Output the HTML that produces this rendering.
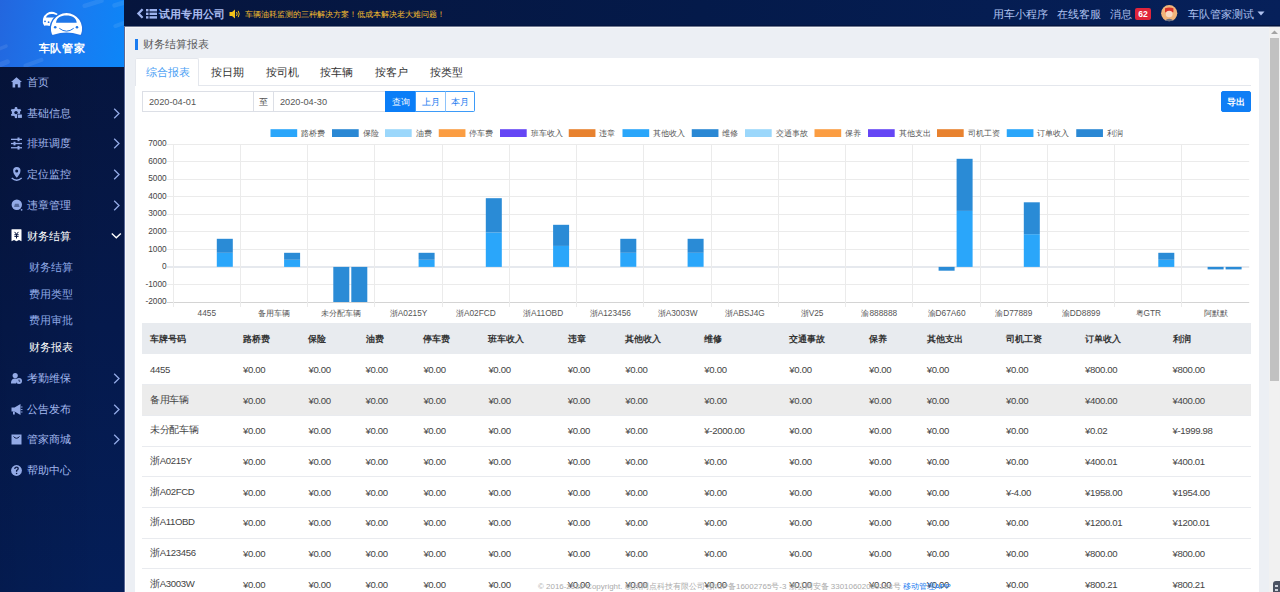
<!DOCTYPE html>
<html><head><meta charset="utf-8">
<style>
*{box-sizing:border-box;margin:0;padding:0}
html,body{width:1280px;height:592px;overflow:hidden;font-family:"Liberation Sans",sans-serif;background:#eceff4;position:relative}
.abs{position:absolute}
#side{position:absolute;left:0;top:0;width:124px;height:592px;background:linear-gradient(90deg,rgba(0,0,0,0.10),rgba(0,0,0,0) 85%),linear-gradient(180deg,#06143b 0%,#05194c 55%,#041e58 100%)}
#logo{position:absolute;left:0;top:0;width:124px;height:67px;background:linear-gradient(100deg,#2366de 0%,#1a7af0 55%,#0c86f8 100%);overflow:hidden}
#logo .t{position:absolute;left:0;width:124px;top:40.5px;text-align:center;color:#fff;font-size:11.2px;line-height:15px;letter-spacing:0.6px;font-weight:bold}
.mi{position:absolute;left:0;width:124px;height:20px;color:#a3b8ee;font-size:11px;line-height:20px}
.mi .tx{position:absolute;left:27px;top:0}
.mi svg.ic{position:absolute;left:11px;top:4px}
.mi svg.ch{position:absolute;left:112px;top:5px}
.sub{position:absolute;left:29px;color:#8ea8e6;font-size:11px;line-height:20px}
#hdr{position:absolute;left:124px;top:0;width:1156px;height:26px;border-bottom:1px solid #021440;background:linear-gradient(90deg,#06153d 0%,#041a4a 50%,#06205a 100%)}
.hl{position:absolute;top:5.7px;color:#afc2f0;font-size:10.8px;line-height:17px;white-space:nowrap}
#ptitle{position:absolute;left:143px;top:36px;font-size:10.6px;line-height:17px;color:#5a5a5a}
#pbar{position:absolute;left:135px;top:39px;width:3px;height:11px;background:#1a7cf0}
#card{position:absolute;left:135px;top:58px;width:1124px;height:560px;background:#fff;border-radius:2px}
#tabline{position:absolute;left:199px;top:85px;width:1052px;height:1px;background:#e4e7ed}
#tab0{position:absolute;left:135px;top:58px;width:64px;height:28px;border:1px solid #e4e7ed;border-bottom:none;background:#fff;border-radius:2px 2px 0 0}
.tab{position:absolute;top:63px;font-size:11px;line-height:18px;color:#333;white-space:nowrap}
.inp{position:absolute;top:91px;height:21px;border:1px solid #dcdfe6;background:#fff;font-size:9.2px;line-height:20px;color:#555;padding-left:6px}
.btn{position:absolute;top:91px;height:21px;font-size:9.4px;line-height:20px;text-align:center;border:1px solid #3d9bf8;color:#1a7cf0;background:#fff;font-weight:500}
#tbl{position:absolute;left:142px;top:323px;width:1109px;border-collapse:collapse;table-layout:fixed}
#tbl th{height:31px;background:#e8ebef;font-weight:bold;color:#333;font-size:9.2px;text-align:left;padding-left:8px;padding-top:2px;white-space:nowrap}
#tbl td{height:30.7px;border-bottom:1px solid #e9ebef;color:#444;font-size:9.6px;letter-spacing:-0.35px;text-align:left;padding-left:8px;white-space:nowrap}
#tbl tr.hv td{background:#ececec}
#foot{position:absolute;left:538px;top:580.5px;font-size:7.95px;line-height:12px;color:#ababab;white-space:nowrap}
#foot span{color:#1a7cf0}
#sb{position:absolute;left:1269px;top:27px;width:11px;height:565px;background:#f1f1f1}
#thumb{position:absolute;left:1270px;top:38px;width:9px;height:343px;background:#c1c1c1}
</style></head>
<body>
<div id="side">
  <div id="logo">
    <svg class="abs" style="left:0;top:0" width="124" height="67">
      <g fill="#fff" opacity="0.08">
        <rect x="82" y="1" width="22" height="4.5" rx="2.2" transform="rotate(-17 93 3)"/>
        <rect x="112" y="1.5" width="16" height="4.5" rx="2.2" transform="rotate(-17 120 3.5)"/>
        <rect x="113" y="22" width="16" height="4" rx="2" transform="rotate(-20 121 24)"/>
        <rect x="-4" y="46" width="12" height="3.5" rx="1.7" transform="rotate(-22 2 47.5)"/>
        <rect x="-3" y="61" width="13" height="5" rx="2.5" transform="rotate(-22 3 63)"/>
        <rect x="23" y="61" width="21" height="4" rx="2" transform="rotate(-20 33 63)"/>
      </g>
      <path d="M44.2 25.8 A9 9 0 1 1 59.5 16 L53 27 Q50 26 47 25.6 Q45 25.4 44.2 25.8 Z" fill="#fff"/>
      <path d="M46 17.6 C46.6 15.3 48.6 14 51.5 14 C54 14 56 14.6 57.5 15.6 L56 17.6 Z" fill="#1f73e6"/>
      <circle cx="45" cy="21.3" r="0.9" fill="#1f73e6"/><circle cx="48.6" cy="22.2" r="0.9" fill="#1f73e6"/>
      <path d="M52.06 34.6 A15.6 15.6 0 1 1 80.94 34.6 Q80.3 35.1 78.8 34.4 Q73 32.5 66.5 32.5 Q60 32.5 54.2 34.4 Q52.7 35.1 52.06 34.6 Z" fill="#1f74e7" stroke="#1f74e7" stroke-width="2.6"/>
      <path d="M52.06 34.6 A15.6 15.6 0 1 1 80.94 34.6 Q80.3 35.1 78.8 34.4 Q73 32.5 66.5 32.5 Q60 32.5 54.2 34.4 Q52.7 35.1 52.06 34.6 Z" fill="#fff"/>
      <path d="M56 22.7 C56.5 18 60.5 15.6 66.4 15.6 C72.3 15.6 76.2 18 76.7 22.7 Z" fill="#1e76e8"/>
      <circle cx="55.2" cy="27.3" r="1.3" fill="#1e76e8"/>
      <circle cx="77" cy="27.3" r="1.3" fill="#1e76e8"/>
      <path d="M59.3 28.3 Q66.5 34 73.7 28.3" stroke="#1e76e8" stroke-width="1" fill="none"/>
    </svg>
    <div class="t">车队管家</div>
  </div>
  <div class="mi" style="top:72.0px;color:#a3b8ee">
<svg class="ic" style="top:2px" width="13" height="16" viewBox="0 -2.5 13 16"><path d="M5.5 0.8 L11 5.6 H9.4 V11 H6.8 V7.8 H4.2 V11 H1.6 V5.6 H0 Z" fill="#93aae6"/></svg>
<span class="tx">首页</span>
</div>
<div class="mi" style="top:102.7px;color:#a3b8ee">
<svg class="ic" style="top:2px" width="13" height="16" viewBox="0 -2.5 13 16"><g fill="#93aae6" transform="translate(5 5.1)"><circle r="4.1"/><rect x="-1.15" y="-5.5" width="2.3" height="2.4" transform="rotate(0)"/><rect x="-1.15" y="-5.5" width="2.3" height="2.4" transform="rotate(60)"/><rect x="-1.15" y="-5.5" width="2.3" height="2.4" transform="rotate(120)"/><rect x="-1.15" y="-5.5" width="2.3" height="2.4" transform="rotate(180)"/><rect x="-1.15" y="-5.5" width="2.3" height="2.4" transform="rotate(240)"/><rect x="-1.15" y="-5.5" width="2.3" height="2.4" transform="rotate(300)"/></g><circle cx="5" cy="5.1" r="1.7" fill="#06163f"/><rect x="6.2" y="6.3" width="5.3" height="4.7" fill="#06163f"/><rect x="6.9" y="7" width="4" height="3.4" fill="#93aae6"/></svg>
<span class="tx">基础信息</span>
<svg class="ch" style="left:113px;top:5px" width="8" height="11"><path d="M1.2 0.8 L6 5.5 L1.2 10.2" stroke="#93aae6" stroke-width="1.3" fill="none"/></svg>
</div>
<div class="mi" style="top:133.4px;color:#a3b8ee">
<svg class="ic" style="top:2px" width="13" height="16" viewBox="0 -2.5 13 16"><g fill="#93aae6"><rect x="0" y="1.2" width="11" height="1.3"/><rect x="0" y="5.4" width="11" height="1.3"/><rect x="0" y="9.6" width="11" height="1.3"/><rect x="6.5" y="0" width="2" height="3.7"/><rect x="2.5" y="4.2" width="2" height="3.7"/><rect x="6.5" y="8.4" width="2" height="3.7"/></g></svg>
<span class="tx">排班调度</span>
<svg class="ch" style="left:113px;top:5px" width="8" height="11"><path d="M1.2 0.8 L6 5.5 L1.2 10.2" stroke="#93aae6" stroke-width="1.3" fill="none"/></svg>
</div>
<div class="mi" style="top:164.1px;color:#a3b8ee">
<svg class="ic" style="top:2px" width="13" height="16" viewBox="0 -2.5 13 16"><path d="M5.8 9.3 C4.6 7.6 2.1 5.4 2.1 2.3 A3.7 3.7 0 0 1 9.5 2.3 C9.5 5.4 7 7.6 5.8 9.3 Z" fill="#93aae6"/><circle cx="5.7" cy="2.5" r="1.5" fill="#06163f"/><path d="M0.7 9.4 Q5.7 13.9 10.7 9.4" stroke="#93aae6" stroke-width="1.4" fill="none"/></svg>
<span class="tx">定位监控</span>
<svg class="ch" style="left:113px;top:5px" width="8" height="11"><path d="M1.2 0.8 L6 5.5 L1.2 10.2" stroke="#93aae6" stroke-width="1.3" fill="none"/></svg>
</div>
<div class="mi" style="top:194.8px;color:#a3b8ee">
<svg class="ic" style="top:2px" width="13" height="16" viewBox="0 -2.5 13 16"><circle cx="5.8" cy="5.2" r="5.2" fill="#93aae6"/><path d="M3.3 6.5 L4 4.2 H7.6 L8.3 6.5 Z M3.2 6.5 H8.4 V7.6 H3.2 Z" fill="#06163f" opacity="0.45"/><circle cx="10.6" cy="10.3" r="0.9" fill="#93aae6"/></svg>
<span class="tx">违章管理</span>
<svg class="ch" style="left:113px;top:5px" width="8" height="11"><path d="M1.2 0.8 L6 5.5 L1.2 10.2" stroke="#93aae6" stroke-width="1.3" fill="none"/></svg>
</div>
<div class="mi" style="top:225.5px;color:#ffffff">
<svg class="ic" style="top:2px" width="13" height="16" viewBox="0 -2.5 13 16"><g transform="translate(0 -1.2)"><path d="M0.5 0.3 Q0.5 0 1 0 H10 Q10.5 0 10.5 0.5 V12 L8 10.6 L5.5 12 L3 10.6 L0.5 12 Z" fill="#fff"/><path d="M3.6 2.6 L5.5 5 L7.4 2.6 M3.4 5.4 H7.6 M3.4 7.1 H7.6 M5.5 5 V9.2" stroke="#06163f" stroke-width="1" fill="none"/></g></svg>
<span class="tx">财务结算</span>
<svg class="ch" style="left:111px;top:6px" width="11" height="8"><path d="M0.8 1.5 L5.3 5.8 L9.8 1.5" stroke="#fff" stroke-width="1.4" fill="none"/></svg>
</div>
<div class="mi" style="top:368.2px;color:#a3b8ee">
<svg class="ic" style="top:2px" width="13" height="16" viewBox="0 -2.5 13 16"><circle cx="4.2" cy="3" r="2.6" fill="#93aae6"/><path d="M0 11 C0 7 2 6 4.2 6 C5.5 6 6 6.3 6.5 6.6 L5 11 Z" fill="#93aae6"/><circle cx="8" cy="8.5" r="3" fill="#93aae6"/><path d="M8 7 V8.7 H9.3" stroke="#0b1a45" stroke-width="0.8" fill="none"/></svg>
<span class="tx">考勤维保</span>
<svg class="ch" style="left:113px;top:5px" width="8" height="11"><path d="M1.2 0.8 L6 5.5 L1.2 10.2" stroke="#93aae6" stroke-width="1.3" fill="none"/></svg>
</div>
<div class="mi" style="top:398.6px;color:#a3b8ee">
<svg class="ic" style="top:2px" width="13" height="16" viewBox="0 -2.5 13 16"><path d="M0.5 4 H3.5 L9.5 0.5 V11.5 L3.5 8 H0.5 Z" fill="#93aae6"/><path d="M9.8 3.5 H11.5 M9.8 6 H11.5 M9.8 8.5 H11.5" stroke="#93aae6" stroke-width="0.9"/><rect x="2" y="8" width="1.8" height="3" fill="#93aae6"/></svg>
<span class="tx">公告发布</span>
<svg class="ch" style="left:113px;top:5px" width="8" height="11"><path d="M1.2 0.8 L6 5.5 L1.2 10.2" stroke="#93aae6" stroke-width="1.3" fill="none"/></svg>
</div>
<div class="mi" style="top:429.4px;color:#a3b8ee">
<svg class="ic" style="top:2px" width="13" height="16" viewBox="0 -2.5 13 16"><path d="M0.5 1 H10.5 V11 H0.5 Z" fill="#93aae6"/><path d="M2.5 3 Q5.5 6.5 8.5 3" stroke="#0b1a45" stroke-width="1" fill="none"/></svg>
<span class="tx">管家商城</span>
<svg class="ch" style="left:113px;top:5px" width="8" height="11"><path d="M1.2 0.8 L6 5.5 L1.2 10.2" stroke="#93aae6" stroke-width="1.3" fill="none"/></svg>
</div>
<div class="mi" style="top:460.3px;color:#a3b8ee">
<svg class="ic" style="top:2px" width="13" height="16" viewBox="0 -2.5 13 16"><circle cx="5.5" cy="6" r="5.4" fill="#93aae6"/><path d="M3.8 4.5 Q3.8 2.6 5.5 2.6 Q7.2 2.6 7.2 4.2 Q7.2 5.2 5.6 6 V7.2" stroke="#0b1a45" stroke-width="1.3" fill="none"/><circle cx="5.6" cy="9" r="0.8" fill="#0b1a45"/></svg>
<span class="tx">帮助中心</span>
</div>
<div class="sub" style="top:256.7px;">财务结算</div>
<div class="sub" style="top:284.0px;">费用类型</div>
<div class="sub" style="top:310.2px;">费用审批</div>
<div class="sub" style="top:336.6px;color:#fff">财务报表</div>
</div>
<div id="hdr">
  <svg class="abs" style="left:12px;top:8px" width="36" height="12">
    <path d="M6.6 1.2 L2.4 5.5 L6.6 9.8" stroke="#9fb3ee" stroke-width="2.3" fill="none"/>
    <g fill="#9fb3ee"><rect x="10" y="1" width="2.5" height="2.4"/><rect x="13.5" y="1" width="7.5" height="2.4"/>
    <rect x="10" y="4.6" width="2.5" height="2.4"/><rect x="13.5" y="4.6" width="7.5" height="2.4"/>
    <rect x="10" y="8.2" width="2.5" height="2.4"/><rect x="13.5" y="8.2" width="7.5" height="2.4"/></g>
  </svg>
  <div class="hl" style="left:35px;font-weight:bold;color:#a9bcf0;font-size:11.2px">试用专用公司</div>
  <svg class="abs" style="left:105px;top:9px" width="12" height="10">
    <path d="M0.5 3 H3 L6 0.5 V9.5 L3 7 H0.5 Z" fill="#f3c21b"/>
    <path d="M7.5 3 Q8.8 5 7.5 7" stroke="#f3c21b" stroke-width="1" fill="none"/>
    <path d="M9.2 1.8 Q11.2 5 9.2 8.2" stroke="#f3c21b" stroke-width="1" fill="none"/>
  </svg>
  <div class="hl" style="left:121px;top:7px;font-size:7.9px;line-height:16px;color:#f5be2e;font-weight:500">车辆油耗监测的三种解决方案！低成本解决老大难问题！</div>
  <div class="hl" style="left:869px">用车小程序</div>
  <div class="hl" style="left:933px">在线客服</div>
  <div class="hl" style="left:986px">消息</div>
  <div class="abs" style="left:1011px;top:8px;width:16px;height:12px;background:#e0253b;border-radius:2px;color:#fff;font-size:8.5px;line-height:12px;text-align:center;font-weight:bold">62</div>
  <svg class="abs" style="left:1037px;top:5px" width="17" height="17">
    <circle cx="8.2" cy="8.2" r="8.1" fill="#f0b47a"/>
    <path d="M4 7.2 V3.2 Q8.2 1.8 12.4 3.2 V7.2 Z" fill="#d9342b"/>
    <ellipse cx="8.2" cy="9" rx="3.4" ry="3.2" fill="#f7d9c4"/>
    <path d="M3.5 16 Q8.2 11.5 12.9 16 Z" fill="#6b6f80"/>
  </svg>
  <div class="hl" style="left:1064px">车队管家测试</div>
  <svg class="abs" style="left:1133px;top:10.5px" width="8" height="5"><path d="M0.5 0.5 H7.5 L4 4.5 Z" fill="#afc2f0"/></svg>
</div>
<div class="abs" style="left:124px;top:26px;width:1156px;height:1px;background:#6f7890"></div>
<div class="abs" style="left:124px;top:27px;width:1156px;height:1px;background:#f7f8fb"></div>
<div class="abs" style="left:124px;top:27px;width:1px;height:565px;background:#5a6896"></div>
<div class="abs" style="left:125px;top:27px;width:1px;height:565px;background:#f8f9fc"></div>
<div id="pbar"></div>
<div id="ptitle">财务结算报表</div>
<div id="card"></div>
<div id="tabline"></div>
<div id="tab0"></div>
<div class="tab" style="left:146px;color:#4aa0f4">综合报表</div>
<div class="tab" style="left:211px">按日期</div>
<div class="tab" style="left:265.6px">按司机</div>
<div class="tab" style="left:320px">按车辆</div>
<div class="tab" style="left:375px">按客户</div>
<div class="tab" style="left:429.7px">按类型</div>
<div class="inp" style="left:142px;width:112px">2020-04-01</div>
<div class="inp" style="left:253px;width:21px;padding-left:0;text-align:center">至</div>
<div class="inp" style="left:273px;width:113px">2020-04-30</div>
<div class="btn" style="left:385px;width:31px;background:#0b7ef7;border-color:#0b7ef7;color:#fff">查询</div>
<div class="btn" style="left:415px;width:31px;border-right-color:#8ec3fa">上月</div>
<div class="btn" style="left:446px;width:29px;border-left:none;border-radius:0 2px 2px 0">本月</div>
<div class="btn" style="left:1221px;width:30px;background:#0f7ef5;border-color:#0f7ef5;color:#fff;border-radius:2px;font-weight:bold">导出</div>
<svg class="abs" style="left:0;top:0" width="1280" height="592">
<line x1="167" y1="144.5" x2="1249.2" y2="144.5" stroke="#ebebeb" stroke-width="1"/>
<text x="166.7" y="146.2" text-anchor="end" font-size="8.3" fill="#444">7000</text>
<line x1="167" y1="161.5" x2="1249.2" y2="161.5" stroke="#ebebeb" stroke-width="1"/>
<text x="166.7" y="163.8" text-anchor="end" font-size="8.3" fill="#444">6000</text>
<line x1="167" y1="179.5" x2="1249.2" y2="179.5" stroke="#ebebeb" stroke-width="1"/>
<text x="166.7" y="181.3" text-anchor="end" font-size="8.3" fill="#444">5000</text>
<line x1="167" y1="196.5" x2="1249.2" y2="196.5" stroke="#ebebeb" stroke-width="1"/>
<text x="166.7" y="198.9" text-anchor="end" font-size="8.3" fill="#444">4000</text>
<line x1="167" y1="214.5" x2="1249.2" y2="214.5" stroke="#ebebeb" stroke-width="1"/>
<text x="166.7" y="216.4" text-anchor="end" font-size="8.3" fill="#444">3000</text>
<line x1="167" y1="231.5" x2="1249.2" y2="231.5" stroke="#ebebeb" stroke-width="1"/>
<text x="166.7" y="234.0" text-anchor="end" font-size="8.3" fill="#444">2000</text>
<line x1="167" y1="249.5" x2="1249.2" y2="249.5" stroke="#ebebeb" stroke-width="1"/>
<text x="166.7" y="251.5" text-anchor="end" font-size="8.3" fill="#444">1000</text>
<line x1="167" y1="267" x2="1249.2" y2="267" stroke="#e6e9ee" stroke-width="2"/>
<text x="166.7" y="269.1" text-anchor="end" font-size="8.3" fill="#444">0</text>
<line x1="167" y1="284.5" x2="1249.2" y2="284.5" stroke="#ebebeb" stroke-width="1"/>
<text x="166.7" y="286.6" text-anchor="end" font-size="8.3" fill="#444">-1000</text>
<line x1="167" y1="302.5" x2="1249.2" y2="302.5" stroke="#d4d4d4" stroke-width="1"/>
<text x="166.7" y="304.2" text-anchor="end" font-size="8.3" fill="#444">-2000</text>
<line x1="173.5" y1="144.0" x2="173.5" y2="307.0" stroke="#ebebeb" stroke-width="1"/>
<line x1="240.5" y1="144.0" x2="240.5" y2="307.0" stroke="#ebebeb" stroke-width="1"/>
<line x1="307.5" y1="144.0" x2="307.5" y2="307.0" stroke="#ebebeb" stroke-width="1"/>
<line x1="374.5" y1="144.0" x2="374.5" y2="307.0" stroke="#ebebeb" stroke-width="1"/>
<line x1="442.5" y1="144.0" x2="442.5" y2="307.0" stroke="#ebebeb" stroke-width="1"/>
<line x1="509.5" y1="144.0" x2="509.5" y2="307.0" stroke="#ebebeb" stroke-width="1"/>
<line x1="576.5" y1="144.0" x2="576.5" y2="307.0" stroke="#ebebeb" stroke-width="1"/>
<line x1="643.5" y1="144.0" x2="643.5" y2="307.0" stroke="#ebebeb" stroke-width="1"/>
<line x1="711.5" y1="144.0" x2="711.5" y2="307.0" stroke="#ebebeb" stroke-width="1"/>
<line x1="778.5" y1="144.0" x2="778.5" y2="307.0" stroke="#ebebeb" stroke-width="1"/>
<line x1="845.5" y1="144.0" x2="845.5" y2="307.0" stroke="#ebebeb" stroke-width="1"/>
<line x1="912.5" y1="144.0" x2="912.5" y2="307.0" stroke="#ebebeb" stroke-width="1"/>
<line x1="980.5" y1="144.0" x2="980.5" y2="307.0" stroke="#ebebeb" stroke-width="1"/>
<line x1="1047.5" y1="144.0" x2="1047.5" y2="307.0" stroke="#ebebeb" stroke-width="1"/>
<line x1="1114.5" y1="144.0" x2="1114.5" y2="307.0" stroke="#ebebeb" stroke-width="1"/>
<line x1="1181.5" y1="144.0" x2="1181.5" y2="307.0" stroke="#ebebeb" stroke-width="1"/>
<text x="206.8" y="316.0" text-anchor="middle" font-size="8.3" fill="#555">4455</text>
<text x="274.1" y="316.0" text-anchor="middle" font-size="8.3" fill="#555">备用车辆</text>
<text x="341.3" y="316.0" text-anchor="middle" font-size="8.3" fill="#555">未分配车辆</text>
<text x="408.6" y="316.0" text-anchor="middle" font-size="8.3" fill="#555">浙A0215Y</text>
<text x="475.8" y="316.0" text-anchor="middle" font-size="8.3" fill="#555">浙A02FCD</text>
<text x="543.1" y="316.0" text-anchor="middle" font-size="8.3" fill="#555">浙A11OBD</text>
<text x="610.3" y="316.0" text-anchor="middle" font-size="8.3" fill="#555">浙A123456</text>
<text x="677.6" y="316.0" text-anchor="middle" font-size="8.3" fill="#555">浙A3003W</text>
<text x="744.8" y="316.0" text-anchor="middle" font-size="8.3" fill="#555">浙ABSJ4G</text>
<text x="812.1" y="316.0" text-anchor="middle" font-size="8.3" fill="#555">浙V25</text>
<text x="879.3" y="316.0" text-anchor="middle" font-size="8.3" fill="#555">渝888888</text>
<text x="946.6" y="316.0" text-anchor="middle" font-size="8.3" fill="#555">渝D67A60</text>
<text x="1013.8" y="316.0" text-anchor="middle" font-size="8.3" fill="#555">渝D77889</text>
<text x="1081.1" y="316.0" text-anchor="middle" font-size="8.3" fill="#555">渝DD8899</text>
<text x="1148.3" y="316.0" text-anchor="middle" font-size="8.3" fill="#555">粤GTR</text>
<text x="1215.6" y="316.0" text-anchor="middle" font-size="8.3" fill="#555">阿默默</text>
<rect x="216.8" y="252.8" width="16" height="14.0" fill="#2aa6fa"/>
<rect x="216.8" y="238.8" width="16" height="14.0" fill="#2a8bd6"/>
<rect x="284.1" y="259.9" width="16" height="7.0" fill="#2aa6fa"/>
<rect x="284.1" y="252.8" width="16" height="7.0" fill="#2a8bd6"/>
<rect x="418.6" y="259.9" width="16" height="7.0" fill="#2aa6fa"/>
<rect x="418.6" y="252.8" width="16" height="7.0" fill="#2a8bd6"/>
<rect x="485.8" y="232.5" width="16" height="34.4" fill="#2aa6fa"/>
<rect x="485.8" y="198.2" width="16" height="34.3" fill="#2a8bd6"/>
<rect x="553.1" y="245.8" width="16" height="21.1" fill="#2aa6fa"/>
<rect x="553.1" y="224.8" width="16" height="21.1" fill="#2a8bd6"/>
<rect x="620.3" y="252.8" width="16" height="14.0" fill="#2aa6fa"/>
<rect x="620.3" y="238.8" width="16" height="14.0" fill="#2a8bd6"/>
<rect x="687.6" y="252.8" width="16" height="14.0" fill="#2aa6fa"/>
<rect x="687.6" y="238.8" width="16" height="14.0" fill="#2a8bd6"/>
<rect x="956.6" y="210.9" width="16" height="56.0" fill="#2aa6fa"/>
<rect x="956.6" y="158.8" width="16" height="52.1" fill="#2a8bd6"/>
<rect x="1023.8" y="234.2" width="16" height="32.7" fill="#2aa6fa"/>
<rect x="1023.8" y="202.3" width="16" height="31.9" fill="#2a8bd6"/>
<rect x="1158.3" y="259.9" width="16" height="7.0" fill="#2aa6fa"/>
<rect x="1158.3" y="252.8" width="16" height="7.0" fill="#2a8bd6"/>
<rect x="333.3" y="266.9" width="16" height="35.1" fill="#2a8bd6"/>
<rect x="351.3" y="266.9" width="16" height="35.1" fill="#2a8bd6"/>
<rect x="938.6" y="266.9" width="16" height="3.8" fill="#2a8bd6"/>
<rect x="1207.6" y="266.9" width="16" height="2.5" fill="#2a8bd6"/>
<rect x="1225.6" y="266.9" width="16" height="2.5" fill="#2a8bd6"/>
<rect x="270.5" y="129.2" width="26.7" height="7.8" fill="#2aa6fa"/>
<text x="301.0" y="136" font-size="8" fill="#555">路桥费</text>
<rect x="332" y="129.2" width="26.7" height="7.8" fill="#2a88d4"/>
<text x="362.5" y="136" font-size="8" fill="#555">保险</text>
<rect x="385" y="129.2" width="26.7" height="7.8" fill="#9bd7fb"/>
<text x="415.5" y="136" font-size="8" fill="#555">油费</text>
<rect x="438.75" y="129.2" width="26.7" height="7.8" fill="#fb9d42"/>
<text x="469.25" y="136" font-size="8" fill="#555">停车费</text>
<rect x="500" y="129.2" width="26.7" height="7.8" fill="#6546f5"/>
<text x="530.5" y="136" font-size="8" fill="#555">班车收入</text>
<rect x="568.75" y="129.2" width="26.7" height="7.8" fill="#e8822f"/>
<text x="599.25" y="136" font-size="8" fill="#555">违章</text>
<rect x="622.5" y="129.2" width="26.7" height="7.8" fill="#2aa6fa"/>
<text x="653.0" y="136" font-size="8" fill="#555">其他收入</text>
<rect x="691.75" y="129.2" width="26.7" height="7.8" fill="#2a88d4"/>
<text x="722.25" y="136" font-size="8" fill="#555">维修</text>
<rect x="745" y="129.2" width="26.7" height="7.8" fill="#9bd7fb"/>
<text x="775.5" y="136" font-size="8" fill="#555">交通事故</text>
<rect x="814.5" y="129.2" width="26.7" height="7.8" fill="#fb9d42"/>
<text x="845.0" y="136" font-size="8" fill="#555">保养</text>
<rect x="868" y="129.2" width="26.7" height="7.8" fill="#6546f5"/>
<text x="898.5" y="136" font-size="8" fill="#555">其他支出</text>
<rect x="937" y="129.2" width="26.7" height="7.8" fill="#e8822f"/>
<text x="967.5" y="136" font-size="8" fill="#555">司机工资</text>
<rect x="1006.75" y="129.2" width="26.7" height="7.8" fill="#2aa6fa"/>
<text x="1037.25" y="136" font-size="8" fill="#555">订单收入</text>
<rect x="1076.25" y="129.2" width="26.7" height="7.8" fill="#2a88d4"/>
<text x="1106.75" y="136" font-size="8" fill="#555">利润</text>
</svg>
<table id="tbl"><colgroup><col style="width:93px"><col style="width:65.4px"><col style="width:57.2px"><col style="width:57.8px"><col style="width:65px"><col style="width:79.4px"><col style="width:57.5px"><col style="width:79.1px"><col style="width:85px"><col style="width:79.6px"><col style="width:57.7px"><col style="width:79.3px"><col style="width:79px"><col style="width:87.6px"><col style="width:86.4px"></colgroup>
<tr class="th"><th>车牌号码</th><th>路桥费</th><th>保险</th><th>油费</th><th>停车费</th><th>班车收入</th><th>违章</th><th>其他收入</th><th>维修</th><th>交通事故</th><th>保养</th><th>其他支出</th><th>司机工资</th><th>订单收入</th><th>利润</th></tr>
<tr><td>4455</td><td>¥0.00</td><td>¥0.00</td><td>¥0.00</td><td>¥0.00</td><td>¥0.00</td><td>¥0.00</td><td>¥0.00</td><td>¥0.00</td><td>¥0.00</td><td>¥0.00</td><td>¥0.00</td><td>¥0.00</td><td>¥800.00</td><td>¥800.00</td></tr>
<tr class="hv"><td>备用车辆</td><td>¥0.00</td><td>¥0.00</td><td>¥0.00</td><td>¥0.00</td><td>¥0.00</td><td>¥0.00</td><td>¥0.00</td><td>¥0.00</td><td>¥0.00</td><td>¥0.00</td><td>¥0.00</td><td>¥0.00</td><td>¥400.00</td><td>¥400.00</td></tr>
<tr><td>未分配车辆</td><td>¥0.00</td><td>¥0.00</td><td>¥0.00</td><td>¥0.00</td><td>¥0.00</td><td>¥0.00</td><td>¥0.00</td><td>¥-2000.00</td><td>¥0.00</td><td>¥0.00</td><td>¥0.00</td><td>¥0.00</td><td>¥0.02</td><td>¥-1999.98</td></tr>
<tr><td>浙A0215Y</td><td>¥0.00</td><td>¥0.00</td><td>¥0.00</td><td>¥0.00</td><td>¥0.00</td><td>¥0.00</td><td>¥0.00</td><td>¥0.00</td><td>¥0.00</td><td>¥0.00</td><td>¥0.00</td><td>¥0.00</td><td>¥400.01</td><td>¥400.01</td></tr>
<tr><td>浙A02FCD</td><td>¥0.00</td><td>¥0.00</td><td>¥0.00</td><td>¥0.00</td><td>¥0.00</td><td>¥0.00</td><td>¥0.00</td><td>¥0.00</td><td>¥0.00</td><td>¥0.00</td><td>¥0.00</td><td>¥-4.00</td><td>¥1958.00</td><td>¥1954.00</td></tr>
<tr><td>浙A11OBD</td><td>¥0.00</td><td>¥0.00</td><td>¥0.00</td><td>¥0.00</td><td>¥0.00</td><td>¥0.00</td><td>¥0.00</td><td>¥0.00</td><td>¥0.00</td><td>¥0.00</td><td>¥0.00</td><td>¥0.00</td><td>¥1200.01</td><td>¥1200.01</td></tr>
<tr><td>浙A123456</td><td>¥0.00</td><td>¥0.00</td><td>¥0.00</td><td>¥0.00</td><td>¥0.00</td><td>¥0.00</td><td>¥0.00</td><td>¥0.00</td><td>¥0.00</td><td>¥0.00</td><td>¥0.00</td><td>¥0.00</td><td>¥800.00</td><td>¥800.00</td></tr>
<tr><td>浙A3003W</td><td>¥0.00</td><td>¥0.00</td><td>¥0.00</td><td>¥0.00</td><td>¥0.00</td><td>¥0.00</td><td>¥0.00</td><td>¥0.00</td><td>¥0.00</td><td>¥0.00</td><td>¥0.00</td><td>¥0.00</td><td>¥800.21</td><td>¥800.21</td></tr>
</table>
<div id="foot">© 2016-2020 Copyright. 杭州网点科技有限公司 浙ICP备16002765号-3 浙公网安备 33010602009188号 <span>移动管理APP</span></div>
<div id="sb"></div>
<div id="thumb"></div>
<svg class="abs" style="left:1270px;top:29px" width="9" height="6"><path d="M1 5 L4.5 1.5 L8 5 Z" fill="#a3a3a3"/></svg>
<div class="abs" style="left:1273px;top:581px;width:9px;height:12px;background:#4b5262;border-radius:3px 0 0 0"><div class="abs" style="left:2px;top:4px;width:3px;height:2px;background:#cfd3dc"></div><div class="abs" style="left:2px;top:8px;width:3px;height:2px;background:#cfd3dc"></div></div>
</body></html>
